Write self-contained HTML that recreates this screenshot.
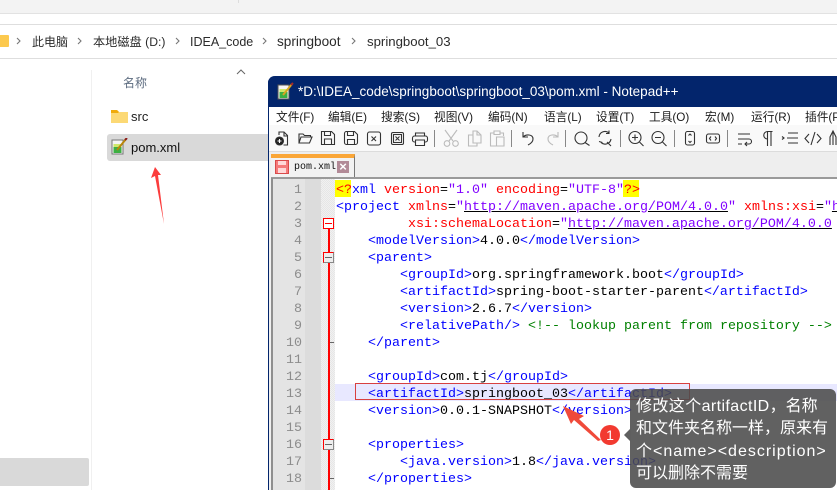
<!DOCTYPE html>
<html><head><meta charset="utf-8"><style>
html,body{margin:0;padding:0;width:837px;height:490px;overflow:hidden;background:#fff}
*{box-sizing:border-box}
.a{position:absolute}
body{font-family:"Liberation Sans","Noto Sans CJK SC",sans-serif;position:relative}
.crumb{position:absolute;top:34px;font-size:12.5px;color:#2b2b2b;white-space:nowrap;line-height:16px}
.menu{position:absolute;top:110px;font-size:11.7px;color:#1a1a1a;white-space:nowrap;line-height:16px}
.ln{position:absolute;left:272px;width:30px;text-align:right;font:13.33px/17px "Liberation Mono",monospace;color:#8c8c8c;height:17px;white-space:pre}
.l{position:absolute;left:336px;width:501px;overflow:hidden;font:13.33px/17px "Liberation Mono",monospace;white-space:pre;color:#000;height:17px}
.t{color:#0000ff}.r{color:#ff0000}.p{color:#8000ff}.g{color:#008000}.u{text-decoration:underline;text-decoration-color:#000;color:#8000ff}
svg{position:absolute;overflow:hidden}
.i{fill:none;stroke:#333;stroke-width:1.1}
.d{fill:none;stroke:#bbb;stroke-width:1.1}
.sep{position:absolute;top:130px;width:1px;height:17px;background:#888}
.fold{position:absolute;left:323px;width:11px;height:11px;border:1px solid #f00;background:#fff}
.fold:after{content:"";position:absolute;left:1px;right:1px;top:4px;height:1px;background:#f00}
.fg{background:#eee;border-right-color:#888;border-bottom-color:#888}
.fg:after{background:#666}
.tick{position:absolute;left:330px;width:4px;height:1px;background:#666}
</style></head><body>

<!-- explorer -->
<div class="a" style="left:0;top:0;width:837px;height:14px;background:#f3f3f3;border-bottom:1px solid #e2e2e2"></div>
<div class="a" style="left:238px;top:0;width:1px;height:3px;background:#ddd"></div>
<div class="a" style="left:0;top:24px;width:837px;height:35px;background:#fff;border-top:1px solid #dedede;border-bottom:1px solid #dedede"></div>
<div class="a" style="left:0;top:35px;width:9px;height:12px;background:#fcc94e;border-radius:0 1px 1px 0"></div>
<svg style="left:0;top:0" width="400" height="60"><g fill="none" stroke="#777" stroke-width="1.100"><path d="M17 38l3 3-3 3M78 38l3 3-3 3M176 38l3 3-3 3M263 38l3 3-3 3M352 38l3 3-3 3"/></g></svg>
<div class="crumb" style="left:32px;font-size:12px">此电脑</div>
<div class="crumb" style="left:93px;font-size:12.2px">本地磁盘 (D:)</div>
<div class="crumb" style="left:190px">IDEA_code</div>
<div class="crumb" style="left:277px;font-size:13.6px">springboot</div>
<div class="crumb" style="left:367px;font-size:13.2px">springboot_03</div>

<div class="a" style="left:91px;top:70px;width:1px;height:420px;background:#f0f0f0"></div>
<div class="a" style="left:123px;top:75px;font-size:12px;line-height:16px;color:#5c6b7f">名称</div>
<svg style="left:236px;top:69px" width="10" height="6"><path d="M1 5l4-4 4 4" fill="none" stroke="#666"/></svg>
<svg style="left:111px;top:109px" width="17" height="14"><path d="M0 1h6l2 2h9v11H0z" fill="#fcd975"/><path d="M0 1h6l2 2H0z" fill="#f0ab0c"/><path d="M0 3h8l-1 1H0z" fill="#f0ab0c"/></svg>
<div class="a" style="left:131px;top:109px;font-size:13px;line-height:16px;color:#222">src</div>
<div class="a" style="left:107px;top:134px;width:161px;height:27px;background:#d9d9d9;border-radius:3px 0 0 3px"></div>
<svg style="left:111px;top:138px" width="17" height="17"><rect x="1" y="2" width="11" height="14" fill="#f4f4f4" stroke="#777"/><rect x="2.500" y="9" width="8" height="6" fill="#3cb043"/><rect x="2.500" y="6" width="8" height="3" fill="#cfe86a"/><path d="M6 12L15 1" stroke="#b8860b" stroke-width="2"/><path d="M14 2l2-2" stroke="#8b1a1a" stroke-width="2"/></svg>
<div class="a" style="left:131px;top:140px;font-size:13px;line-height:16px;color:#111">pom.xml</div>
<svg style="left:145px;top:160px" width="25" height="70"><path d="M10 7L16 15 13 15 19 64 10 16 6 18z" fill="#fb3c3c"/></svg>
<div class="a" style="left:0;top:458px;width:89px;height:28px;background:#d9d9d9;border-radius:0 2px 2px 0"></div>

<!-- notepad++ window -->
<div class="a" style="left:268px;top:76px;width:569px;height:414px;background:#f0f0f0;border-left:1px solid #03256c;border-radius:7px 0 0 0"></div>
<div class="a" style="left:268px;top:76px;width:569px;height:31px;background:#03256c;border-radius:7px 0 0 0"></div>
<svg style="left:277px;top:82px" width="17" height="18"><rect x="1" y="3" width="11" height="14" fill="#f4f4f4" stroke="#555"/><rect x="2.500" y="10" width="8" height="6" fill="#3cb043"/><rect x="2.500" y="7" width="8" height="3" fill="#cfe86a"/><path d="M6 13L15 2" stroke="#d9a520" stroke-width="2"/><path d="M14 3l2-2" stroke="#a52a2a" stroke-width="2"/></svg>
<div class="a" style="left:298px;top:84px;font-size:13.5px;line-height:16px;color:#fff;white-space:nowrap">*D:\IDEA_code\springboot\springboot_03\pom.xml - Notepad++</div>

<div class="a" style="left:269px;top:107px;width:568px;height:18px;background:#fff"></div>
<div class="menu" style="left:276px">文件(F)</div>
<div class="menu" style="left:328px">编辑(E)</div>
<div class="menu" style="left:381px">搜索(S)</div>
<div class="menu" style="left:434px">视图(V)</div>
<div class="menu" style="left:488px">编码(N)</div>
<div class="menu" style="left:544px">语言(L)</div>
<div class="menu" style="left:596px">设置(T)</div>
<div class="menu" style="left:649px">工具(O)</div>
<div class="menu" style="left:705px">宏(M)</div>
<div class="menu" style="left:751px">运行(R)</div>
<div class="menu" style="left:805px;width:32px;overflow:hidden">插件(P)</div>

<div class="a" style="left:269px;top:125px;width:568px;height:27px;background:#f9f9f9;border-bottom:1px solid #dcdcdc"></div>
<svg style="left:0;top:0" width="837" height="155">
 <g class="i">
  <path d="M279 135v-3h5l3.500 3.500v9.500h-4M284 132v4h3.500"/>
  <circle cx="279.500" cy="141" r="4" fill="#222"/><path d="M277.500 141h4M279.500 139v4" stroke="#fff"/>
  <path d="M299 143v-9h4l1.500 1.500h6v1.500M299 143l2-6h11l-2.500 6z"/>
  <path d="M321.500 131.500h10l3 3v10h-13zM324.500 144.500v-5.500h7v5.500M324.500 131.500v4h6v-4"/>
  <path d="M344.500 133.500a2 2 0 0 1 2-2h8l3 3v8a2 2 0 0 1-2 2h-9a2 2 0 0 1-2-2zM347.500 144.500v-5h7v5M347.500 131.500v4h6v-4"/>
  <rect x="367.500" y="132" width="13" height="13" rx="2"/><path d="M371.500 136.500l4.500 4.500m0-4.500l-4.500 4.500"/>
  <rect x="391.500" y="132.500" width="12" height="12" rx="1.500"/><rect x="393.500" y="134.500" width="8" height="8"/><path d="M395.500 136.500l4 4m0-4l-4 4"/>
  <path d="M415.500 136v-3h9v3M415.500 142h-1a2 2 0 0 1-2-2v-2a2 2 0 0 1 2-2h11a2 2 0 0 1 2 2v2a2 2 0 0 1-2 2h-1M415.500 140h9v5.500h-9z"/>
  <path d="M523 132v5h5M523 137c3-3 10-3 10 2 0 3-3 5-5 6"/>
  <circle cx="581" cy="138" r="6"/><path d="M585 142.500l4.500 3"/>
  <path d="M599 137a6 6 0 0 1 10-4M611 139a6 6 0 0 1-10 3.500M609 130.500v3h-3M599 141.500l3.500 1M607 142l4 4"/>
  <circle cx="635" cy="137.500" r="6"/><path d="M632 137.500h6M635 134.500v6M639.500 142l4 4"/>
  <circle cx="658" cy="137.500" r="6"/><path d="M655 137.500h6M662.500 142l4 4"/>
  <rect x="685.500" y="131.500" width="9" height="13.500" rx="2"/><path d="M688.500 135.500l1.500-1.500 1.500 1.500M688.500 141l1.500 1.500 1.500-1.500"/>
  <rect x="706.500" y="134" width="13" height="9" rx="2"/><path d="M711 136.500l-1.500 2 1.500 2M715 136.500l1.500 2-1.500 2"/>
  <path d="M738 134h12M738 139h11a2.500 2.500 0 0 1 0 5h-4M747 142l-2 2 2 2M738 144h4"/>
  <path d="M767 131.500h5.500M767.500 131.500v14.500M771 131.500v14.500M767.500 131.500a3.500 3.500 0 0 0 0 7.500"/>
  <path d="M782 136.500l2 1.500-2 1.500M788 133h10M787 138h11M788 143h10"/>
  <path d="M809 134l-4 4.500 4 4.500M817 134l4 4.500-4 4.500M815 132l-4 13"/>
  <path d="M830 145v-8l3-6 3 6v8M833 131v14"/>
 </g>
 <g class="d">
  <path d="M445 130l8 11M457 130l-8 11"/><circle cx="447" cy="143.500" r="2.800"/><circle cx="455.500" cy="143.500" r="2.800"/>
  <path d="M473 131h4l4 4v8h-8zM477 131v4h4M473 135h-4.500v11h8.500v-3"/>
  <path d="M493.500 133h-3v13h5.500M500.500 133h3v3M494 131h6v3.500h-6zM496.500 137h7.500v9h-7.500z"/>
  <path d="M558 132v5h-5M558 137c-3-3-10-3-10 2 0 3 3 5 5 6"/>
 </g>
</svg>
<div class="sep" style="left:434px"></div><div class="sep" style="left:511px"></div>
<div class="sep" style="left:565px"></div><div class="sep" style="left:620px"></div><div class="sep" style="left:674px"></div><div class="sep" style="left:727px"></div>

<div class="a" style="left:269px;top:152px;width:568px;height:26px;background:#eeeeee"></div>
<div class="a" style="left:271px;top:154px;width:84px;height:24px;background:#f2f2f2;border-right:1px solid #777;border-top:4px solid #faa637"></div>
<div class="a" style="left:275px;top:160px;width:14px;height:14px;background:#f57a7a;border:1px solid #d84a4a"></div>
<div class="a" style="left:278px;top:161px;width:8px;height:4px;background:#ffd8d8"></div>
<div class="a" style="left:278px;top:168px;width:8px;height:5px;background:#ffd8d8"></div>
<div class="a" style="left:294px;top:160px;font:10px/16px 'Liberation Mono',monospace;color:#111;white-space:nowrap">pom.xml</div>
<div class="a" style="left:337px;top:161px;width:12px;height:12px;background:#b28a97;color:#fff;font:bold 13px/12px 'Liberation Sans',sans-serif;text-align:center">×</div>

<!-- editor -->
<div class="a" style="left:271px;top:178px;width:566px;height:312px;background:#fff"></div>
<div class="a" style="left:271px;top:177px;width:566px;height:2px;background:#9a9a9a"></div>
<div class="a" style="left:271px;top:178px;width:2px;height:312px;background:#8f8f8f"></div>
<div class="a" style="left:273px;top:179px;width:32px;height:311px;background:#e4e4e4"></div>
<div class="a" style="left:305px;top:179px;width:16px;height:311px;background:#dcdcdc"></div>
<div class="a" style="left:321px;top:179px;width:14px;height:311px;background:repeating-conic-gradient(#f1f1f1 0 25%,#e6e6e6 0 50%) 0 0/2px 2px"></div>

<div class="a" style="left:335px;top:384px;width:502px;height:17px;background:#e8e8ff"></div>
<div class="a" style="left:355px;top:383px;width:335px;height:17px;border:1px solid #d84040"></div>

<div class="a" style="left:328px;top:228px;width:2px;height:262px;background:#f00"></div>

<div class="fold" style="top:218px"></div>
<div class="fold fg" style="top:252px"></div>
<div class="fold fg" style="top:439px"></div>
<div class="tick" style="top:342px"></div>
<div class="tick" style="top:478px"></div>

<div class="ln" style="top:182px">1</div>
<div class="ln" style="top:199px">2</div>
<div class="ln" style="top:216px">3</div>
<div class="ln" style="top:233px">4</div>
<div class="ln" style="top:250px">5</div>
<div class="ln" style="top:267px">6</div>
<div class="ln" style="top:284px">7</div>
<div class="ln" style="top:301px">8</div>
<div class="ln" style="top:318px">9</div>
<div class="ln" style="top:335px">10</div>
<div class="ln" style="top:352px">11</div>
<div class="ln" style="top:369px">12</div>
<div class="ln" style="top:386px">13</div>
<div class="ln" style="top:403px">14</div>
<div class="ln" style="top:420px">15</div>
<div class="ln" style="top:437px">16</div>
<div class="ln" style="top:454px">17</div>
<div class="ln" style="top:471px">18</div>

<div class="a" style="left:335px;top:180px;width:16px;height:17px;background:#ff0"></div>
<div class="a" style="left:623px;top:180px;width:16px;height:17px;background:#ff0"></div>

<div class="l" style="top:182px"><span class="r">&lt;?</span><span class="t">xml</span> <span class="r">version</span>=<span class="p">"1.0"</span> <span class="r">encoding</span>=<span class="p">"UTF-8"</span><span class="r">?&gt;</span></div>
<div class="l" style="top:199px"><span class="t">&lt;project</span> <span class="r">xmlns</span>=<span class="p">"</span><span class="u">http://maven.apache.org/POM/4.0.0</span><span class="p">"</span> <span class="r">xmlns:xsi</span>=<span class="p">"</span><span class="u">h</span></div>
<div class="l" style="top:216px">         <span class="r">xsi:schemaLocation</span>=<span class="p">"</span><span class="u">http://maven.apache.org/POM/4.0.0</span></div>
<div class="l" style="top:233px">    <span class="t">&lt;modelVersion&gt;</span>4.0.0<span class="t">&lt;/modelVersion&gt;</span></div>
<div class="l" style="top:250px">    <span class="t">&lt;parent&gt;</span></div>
<div class="l" style="top:267px">        <span class="t">&lt;groupId&gt;</span>org.springframework.boot<span class="t">&lt;/groupId&gt;</span></div>
<div class="l" style="top:284px">        <span class="t">&lt;artifactId&gt;</span>spring-boot-starter-parent<span class="t">&lt;/artifactId&gt;</span></div>
<div class="l" style="top:301px">        <span class="t">&lt;version&gt;</span>2.6.7<span class="t">&lt;/version&gt;</span></div>
<div class="l" style="top:318px">        <span class="t">&lt;relativePath/&gt;</span> <span class="g">&lt;!-- lookup parent from repository --&gt;</span></div>
<div class="l" style="top:335px">    <span class="t">&lt;/parent&gt;</span></div>
<div class="l" style="top:369px">    <span class="t">&lt;groupId&gt;</span>com.tj<span class="t">&lt;/groupId&gt;</span></div>
<div class="l" style="top:386px">    <span class="t">&lt;artifactId&gt;</span>springboot_03<span class="t">&lt;/artifactId&gt;</span></div>
<div class="l" style="top:403px">    <span class="t">&lt;version&gt;</span>0.0.1-SNAPSHOT<span class="t">&lt;/version&gt;</span></div>
<div class="l" style="top:437px">    <span class="t">&lt;properties&gt;</span></div>
<div class="l" style="top:454px">        <span class="t">&lt;java.version&gt;</span>1.8<span class="t">&lt;/java.version&gt;</span></div>
<div class="l" style="top:471px">    <span class="t">&lt;/properties&gt;</span></div>

<!-- annotation -->
<div class="a" style="left:630px;top:389px;width:206px;height:99px;background:rgba(75,75,75,.88);border-radius:6px"></div>
<svg style="left:555px;top:400px" width="60" height="45"><path d="M8 6L29 16 24 19 46 40 43 41 19 20 16 24z" fill="#f04a3a"/></svg>
<svg style="left:624px;top:428px" width="7" height="14"><path d="M7 0L0 7l7 7z" fill="#5f5f5f"/></svg>
<div class="a" style="left:600px;top:425px;width:20px;height:20px;border-radius:50%;background:#f23a30;color:#fff;font:14px/20px 'Liberation Sans',sans-serif;text-align:center">1</div>
<div class="a" style="left:636px;top:396px;font-size:16px;line-height:22.300px;color:#fff;white-space:nowrap"><span style="letter-spacing:.4px">修改这个artifactID</span>，名称<br>和文件夹名称一样，原来有<br><span style="letter-spacing:1px">个&lt;name&gt;&lt;description&gt;</span><br>可以删除不需要</div>
</body></html>
